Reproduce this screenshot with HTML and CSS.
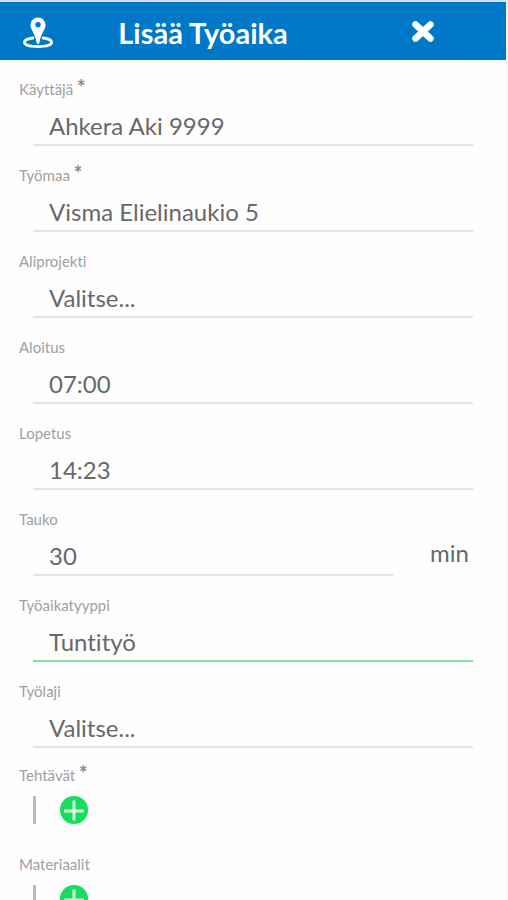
FILE: index.html
```html
<!DOCTYPE html>
<html lang="fi">
<head>
<meta charset="utf-8">
<meta name="viewport" content="width=device-width, initial-scale=1">
<title>Lisää Työaika</title>
<link rel="stylesheet" href="styles.css">
</head>
<body>
<div class="app">
  <header class="bar">
    <button class="bar-button" type="button" aria-label="Sijainti">
      <svg width="32" height="36" viewBox="0 0 32 36" aria-hidden="true">
        <path d="M11 25C5 25.800 2.400 27.500 2.400 29.300c0 2.800 6 4.300 13.600 4.300s13.600-1.500 13.600-4.300c0-1.800-2.600-3.500-8.600-4.300" fill="none" stroke="#fff" stroke-width="2.800" stroke-linecap="round"/>
        <path fill="#fff" fill-rule="evenodd" d="M16 4.500a7.600 7.600 0 0 0-7.600 7.600c0 4.800 5.100 8.800 6.100 17.500a1.500 1.500 0 0 0 3 0c1-8.700 6.100-12.700 6.100-17.500A7.600 7.600 0 0 0 16 4.500zm0 4.500a2.700 2.700 0 1 1 0 5.400 2.700 2.700 0 0 1 0-5.400z"/>
      </svg>
    </button>
    <h1 class="title">Lisää Työaika</h1>
    <button class="bar-button" type="button" aria-label="Sulje">
      <svg width="24" height="24" viewBox="0 0 24 24" aria-hidden="true">
        <path d="M4.500 5.500l15 14M19.500 5.500l-15 14" stroke="#fff" stroke-width="6.500" stroke-linecap="round"/>
      </svg>
    </button>
  </header>
  <form class="form">
    <div class="field">
      <label class="label" for="user">Käyttäjä <span class="required">*</span></label>
      <select class="control" id="user"><option>Ahkera Aki 9999</option></select>
    </div>
    <div class="field">
      <label class="label" for="site">Työmaa <span class="required">*</span></label>
      <select class="control" id="site"><option>Visma Elielinaukio 5</option></select>
    </div>
    <div class="field">
      <label class="label" for="sub">Aliprojekti</label>
      <select class="control" id="sub"><option>Valitse...</option></select>
    </div>
    <div class="field">
      <label class="label" for="start">Aloitus</label>
      <input class="control" id="start" type="text" value="07:00">
    </div>
    <div class="field">
      <label class="label" for="end">Lopetus</label>
      <input class="control" id="end" type="text" value="14:23">
    </div>
    <div class="field">
      <label class="label" for="break">Tauko</label>
      <div class="with-unit">
        <input class="control" id="break" type="text" value="30">
        <span class="unit">min</span>
      </div>
    </div>
    <div class="field">
      <label class="label" for="type">Työaikatyyppi</label>
      <select class="control control-active" id="type"><option>Tuntityö</option></select>
    </div>
    <div class="field">
      <label class="label" for="kind">Työlaji</label>
      <select class="control" id="kind"><option>Valitse...</option></select>
    </div>
    <div class="field field-list">
      <span class="label">Tehtävät <span class="required">*</span></span>
      <div class="list">
        <button class="add" type="button" aria-label="Lisää tehtävä">
          <svg width="28" height="28" viewBox="0 0 28 28" aria-hidden="true"><circle cx="14" cy="14" r="14" fill="#18dc5c"/><path d="M14 4.500v20M4 15h20" stroke="#d4fbe0" stroke-width="3"/></svg>
        </button>
      </div>
    </div>
    <div class="field field-list">
      <span class="label">Materiaalit</span>
      <div class="list">
        <button class="add" type="button" aria-label="Lisää materiaali">
          <svg width="28" height="28" viewBox="0 0 28 28" aria-hidden="true"><circle cx="14" cy="14" r="14" fill="#18dc5c"/><path d="M14 4.500v20M4 15h20" stroke="#d4fbe0" stroke-width="3"/></svg>
        </button>
      </div>
    </div>
  </form>
</div>
</body>
</html>
```
FILE: styles.css
```css
* {
  box-sizing: border-box;
}

html {
  scrollbar-width: none;
}

body {
  margin: 0;
  background: #fefefe;
  color: #686868;
  font-family: Lato, "Liberation Sans", sans-serif;
  font-variant-ligatures: none;
}

.app {
  min-height: 100vh;
  margin-right: 2px;
  border-top: 2px solid #dcdfee;
  box-shadow: 2px 0 0 #f5f5f5;
}

.bar {
  display: grid;
  grid-template-columns: 76px 1fr 166px;
  align-items: center;
  height: 58px;
  background: #0078c8;
}

.bar-button,
.add {
  display: flex;
  justify-content: center;
  padding: 0;
  border: 0;
  background: none;
}

.title {
  margin: 0;
  padding: 4px 10px 0 0;
  color: #fff;
  font-size: 29px;
  font-weight: 700;
  line-height: 32px;
  text-align: center;
}

.field {
  padding: 20px 33px 0 19px;
}

.label {
  display: block;
  color: #a0a0a0;
  font-size: 15px;
  line-height: 18px;
}

.required {
  color: #888;
  font-size: 20px;
  font-weight: 900;
  line-height: 1px;
}

.control {
  display: block;
  width: calc(100% - 14px);
  height: 48px;
  margin: 0 0 0 14px;
  padding: 8px 16px 0;
  border: 0;
  border-bottom: 2px solid #e4e4e4;
  border-radius: 0;
  background: none;
  color: #686868;
  font: inherit;
  font-size: 24px;
  font-variant-ligatures: none;
  appearance: none;
}

.control-active {
  border-bottom-color: #83e3a0;
}

.with-unit {
  display: grid;
  grid-template-columns: 1fr 80px;
  align-items: center;
}

.unit {
  padding: 0 4px 0 0;
  font-size: 24px;
  text-align: right;
}

.field-list {
  padding-top: 18px;
}

.list {
  display: flex;
  margin: 12px 0 13px 14px;
  padding-left: 24px;
  border-left: 3px solid #bbb;
}
```
